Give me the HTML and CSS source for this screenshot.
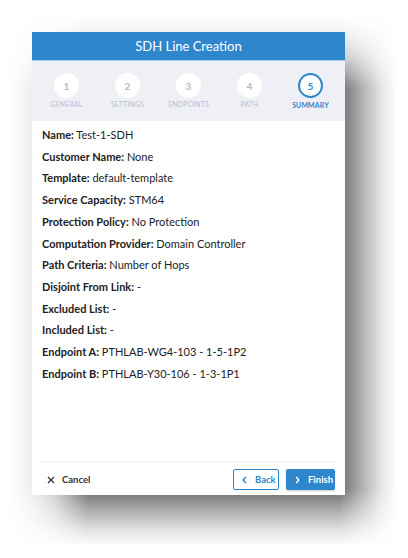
FILE: index.html
```html
<!DOCTYPE html>
<html>
<head>
<meta charset="utf-8">
<link rel="stylesheet" href="styles.css">
</head>
<body>
<div class="card">
  <div class="header">SDH Line Creation</div>
  <div class="steps">
    <div class="step"><div class="circle">1</div><div class="label">General</div></div>
    <div class="step"><div class="circle">2</div><div class="label">Settings</div></div>
    <div class="step"><div class="circle">3</div><div class="label">Endpoints</div></div>
    <div class="step"><div class="circle">4</div><div class="label">Path</div></div>
    <div class="step active"><div class="circle">5</div><div class="label">Summary</div></div>
  </div>
  <div class="content">
    <div class="row"><b>Name:</b> Test-1-SDH</div>
    <div class="row"><b>Customer Name:</b> None</div>
    <div class="row"><b>Template:</b> default-template</div>
    <div class="row"><b>Service Capacity:</b> STM64</div>
    <div class="row"><b>Protection Policy:</b> No Protection</div>
    <div class="row"><b>Computation Provider:</b> Domain Controller</div>
    <div class="row"><b>Path Criteria:</b> Number of Hops</div>
    <div class="row"><b>Disjoint From Link:</b> -</div>
    <div class="row"><b>Excluded List:</b> -</div>
    <div class="row"><b>Included List:</b> -</div>
    <div class="row"><b>Endpoint A:</b> PTHLAB-WG4-103 - 1-5-1P2</div>
    <div class="row"><b>Endpoint B:</b> PTHLAB-Y30-106 - 1-3-1P1</div>
  </div>
  <div class="footer">
    <div class="cancel">
      <svg class="ico" width="8" height="8" viewBox="0 0 8 8"><path d="M1 1L7 7M7 1L1 7" stroke="#333" stroke-width="1.3" fill="none"/></svg>
      <span>Cancel</span>
    </div>
    <div class="actions">
      <div class="btn back"><svg class="ico" width="5" height="8" viewBox="0 0 5 8"><path d="M3.8 1L1.2 4L3.8 7" stroke="#2e86cd" stroke-width="1.5" fill="none"/></svg><span>Back</span></div>
      <div class="btn finish"><svg class="ico" width="5" height="8" viewBox="0 0 5 8"><path d="M1.2 1L3.8 4L1.2 7" stroke="#fff" stroke-width="1.5" fill="none"/></svg><span>Finish</span></div>
    </div>
  </div>
</div>
</body>
</html>
```
FILE: styles.css
```css
html, body {
  margin: 0;
  padding: 0;
  background: #ffffff;
}
body {
  font-family: Lato, "Open Sans", sans-serif;
  padding: 32px 0 0 32px;
  box-sizing: border-box;
  min-height: 558px;
}
.card {
  position: relative;
  z-index: 0;
  width: 313px;
  height: 463px;
  display: flex;
  flex-direction: column;
}
.card::before {
  content: "";
  position: absolute;
  left: 0;
  top: 0;
  right: 0;
  bottom: 0;
  background: #fff;
  z-index: -1;
}
.card::after {
  content: "";
  position: absolute;
  left: -24px;
  top: -18px;
  right: -52px;
  bottom: -52px;
  background: rgba(0, 0, 0, 0.58);
  z-index: -2;
  -webkit-mask-image:
    linear-gradient(to right, rgba(0,0,0,0) 0, rgba(0,0,0,0.05) 14px, rgba(0,0,0,0.14) 28px, rgba(0,0,0,0.35) 48px, #000 80px, #000 calc(100% - 58px), rgba(0,0,0,0.55) calc(100% - 36px), rgba(0,0,0,0.18) calc(100% - 16px), rgba(0,0,0,0) 100%),
    linear-gradient(to bottom, rgba(0,0,0,0) 0, rgba(0,0,0,0.05) 12px, rgba(0,0,0,0.14) 24px, rgba(0,0,0,0.35) 42px, #000 74px, #000 calc(100% - 58px), rgba(0,0,0,0.55) calc(100% - 36px), rgba(0,0,0,0.18) calc(100% - 16px), rgba(0,0,0,0) 100%);
  -webkit-mask-composite: source-in;
  mask-image:
    linear-gradient(to right, rgba(0,0,0,0) 0, rgba(0,0,0,0.05) 14px, rgba(0,0,0,0.14) 28px, rgba(0,0,0,0.35) 48px, #000 80px, #000 calc(100% - 58px), rgba(0,0,0,0.55) calc(100% - 36px), rgba(0,0,0,0.18) calc(100% - 16px), rgba(0,0,0,0) 100%),
    linear-gradient(to bottom, rgba(0,0,0,0) 0, rgba(0,0,0,0.05) 12px, rgba(0,0,0,0.14) 24px, rgba(0,0,0,0.35) 42px, #000 74px, #000 calc(100% - 58px), rgba(0,0,0,0.55) calc(100% - 36px), rgba(0,0,0,0.18) calc(100% - 16px), rgba(0,0,0,0) 100%);
  mask-composite: intersect;
}
.header {
  height: 28px;
  background: #2e86cd;
  border-bottom: 1px solid #a9cbea;
  color: #fff;
  font-size: 13px;
  display: flex;
  align-items: center;
  justify-content: center;
}
.steps {
  height: 60px;
  background: #eff0f5;
  display: grid;
  grid-template-columns: repeat(5, 1fr);
  padding: 0 4px;
}
.step {
  display: flex;
  flex-direction: column;
  align-items: center;
  padding-top: 12px;
}
.circle {
  width: 25px;
  height: 25px;
  border-radius: 50%;
  background: #fff;
  box-sizing: border-box;
  color: #b4b8c6;
  font-size: 10px;
  font-weight: 700;
  display: flex;
  align-items: center;
  justify-content: center;
}
.label {
  margin-top: 2px;
  font-size: 7px;
  text-transform: uppercase;
  color: #bcbfcb;
  letter-spacing: 0.1px;
}
.step.active .circle {
  border: 2px solid #2e86cd;
  color: #2e86cd;
}
.step.active .label {
  color: #2e86cd;
  font-weight: 700;
  margin-top: 3px;
}
.content {
  flex: 1;
  background: #fff;
  padding: 3px 10px 0 10px;
  color: #222;
  font-size: 11px;
}
.row {
  line-height: 21.7px;
}
.row b {
  font-weight: 700;
}
.footer {
  background: #fff;
  padding: 0 10px 0 9px;
  height: 34px;
  box-sizing: border-box;
  display: flex;
  align-items: flex-start;
  justify-content: space-between;
  position: relative;
}
.footer::before {
  content: "";
  position: absolute;
  left: 9px;
  right: 10px;
  top: 0;
  height: 2px;
  background: #f3f4f6;
}
.cancel {
  display: flex;
  align-items: center;
  gap: 7px;
  height: 21px;
  margin-top: 8px;
  padding-left: 6px;
  color: #333;
  font-size: 9.5px;
  font-weight: 700;
}
.actions {
  display: flex;
  gap: 7px;
  margin-top: 8px;
}
.ico {
  flex-shrink: 0;
  display: block;
}
.btn {
  height: 21px;
  box-sizing: border-box;
  border-radius: 2px;
  font-size: 9.5px;
  font-weight: 700;
  display: flex;
  align-items: center;
  gap: 8px;
  padding: 0 0 0 8px;
}
.back {
  width: 46px;
  background: #fff;
  border: 1px solid #2e86cd;
  color: #2e86cd;
}
.finish {
  width: 49px;
  background: #2e86cd;
  border: 1px solid #2e86cd;
  color: #fff;
  box-shadow: 0 1px 2px rgba(0,0,0,0.2);
}
```
